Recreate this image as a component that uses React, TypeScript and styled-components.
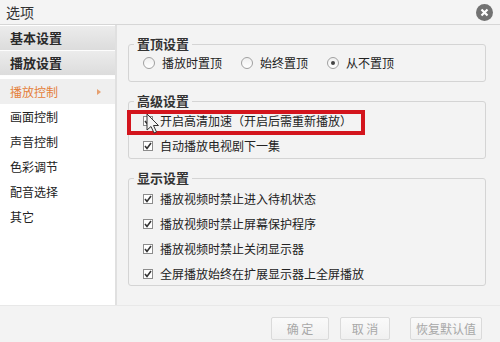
import styled, { createGlobalStyle } from "styled-components";

const GlobalStyle = createGlobalStyle`
  html, body {
    margin: 0;
    padding: 0;
    background: #f3f3f3;
  }
  body {
    font-family: "Noto Sans CJK SC", "Liberation Sans", sans-serif;
  }
`;

const Window = styled.div`
  position: relative;
  width: 500px;
  height: 342px;
  display: flex;
  flex-direction: column;
  overflow: hidden;
  background: #f3f3f3;
  color: #222;
  font-size: 12px;
`;

const TitleBar = styled.div`
  flex: none;
  height: 24px;
  display: flex;
  align-items: center;
  justify-content: space-between;
  padding: 0 7px 0 6px;
  background: #f4f4f4;
  border-bottom: 1px solid #d6d6d6;
`;

const Title = styled.span`
  font-size: 14px;
  line-height: 1;
  color: #333;
`;

const CloseButton = styled.div`
  width: 17px;
  height: 17px;
  border-radius: 50%;
  background: #727272;
  display: flex;
  align-items: center;
  justify-content: center;
`;

const Body = styled.div`
  flex: none;
  height: 280px;
  display: flex;
`;

const Sidebar = styled.div`
  width: 115px;
  flex: none;
  background: #fff;
  border-right: 2px solid #e0e0e0;
  display: flex;
  flex-direction: column;
  padding-top: 1px;
`;

const SectionHeader = styled.div`
  height: 24px;
  line-height: 24px;
  padding-left: 10px;
  font-size: 13px;
  font-weight: bold;
  color: #2a2a2a;
  background: linear-gradient(#ececec, #dcdcdc);
  border-bottom: 1px solid #fdfdfd;
`;

const NavList = styled.div`
  margin-top: 3px;
  display: flex;
  flex-direction: column;
`;

const NavItem = styled.div<{ $active?: boolean }>`
  height: 25px;
  line-height: 25px;
  padding: 0 14px 0 10px;
  display: flex;
  align-items: center;
  justify-content: space-between;
  color: ${(p) => (p.$active ? "#e5803a" : "#222")};
  background: ${(p) => (p.$active ? "#efefef" : "transparent")};
`;

const NavArrow = styled.span`
  width: 0;
  height: 0;
  border-top: 3px solid transparent;
  border-bottom: 3px solid transparent;
  border-left: 4px solid #e6a070;
`;

const Content = styled.div`
  flex: 1;
  padding: 11px 14px 0 11px;
  display: flex;
  flex-direction: column;
  gap: 11px;
`;

const Group = styled.fieldset`
  margin: 0;
  padding: 0;
  min-width: 0;
  border: 1px solid #d4d4d4;
  border-radius: 3px;
`;

const Legend = styled.legend`
  margin-left: 5px;
  padding: 0 3px;
  font-size: 13px;
  line-height: 16px;
  font-weight: bold;
  color: #333;
`;

const Options = styled.div<{ $row?: boolean; $pt: number; $pb: number }>`
  display: flex;
  flex-direction: ${(p) => (p.$row ? "row" : "column")};
  gap: ${(p) => (p.$row ? 19 : 9)}px;
  padding: ${(p) => p.$pt}px 14px ${(p) => p.$pb}px 14px;
`;

const Option = styled.label<{ $marked?: boolean }>`
  position: relative;
  height: 16px;
  display: flex;
  align-items: center;
  gap: 7px;
  line-height: 16px;
  color: #222;
  white-space: nowrap;

  ${(p) =>
    p.$marked &&
    `
    &::after {
      content: "";
      position: absolute;
      left: -16px;
      top: -3px;
      width: 238px;
      height: 25px;
      box-sizing: border-box;
      border: 4px solid #d3151d;
    }
  `}
`;

const Box = styled.span`
  width: 10px;
  height: 10px;
  flex: none;
  box-sizing: border-box;
  border: 1px solid #8c8c8c;
  background: #fff;
  display: flex;
  align-items: center;
  justify-content: center;
`;

const RadioCircle = styled.span<{ $on?: boolean }>`
  width: 12px;
  height: 12px;
  flex: none;
  box-sizing: border-box;
  border-radius: 50%;
  border: 1px solid #a0a0a0;
  background: linear-gradient(#f0f0f0, #fff);
  display: flex;
  align-items: center;
  justify-content: center;

  &::after {
    content: "";
    width: 4px;
    height: 4px;
    border-radius: 50%;
    background: ${(p) => (p.$on ? "#444" : "transparent")};
  }
`;

const Footer = styled.div`
  flex: 1;
  display: flex;
  justify-content: flex-end;
  align-items: flex-start;
  padding: 11px 18px 0 0;
  border-top: 1px solid #e8e8e8;
`;

const Button = styled.div<{ $w: number; $gap?: number }>`
  width: ${(p) => p.$w}px;
  height: 23px;
  margin-left: ${(p) => p.$gap ?? 0}px;
  box-sizing: border-box;
  border: 1px solid #dadada;
  border-radius: 2px;
  background: linear-gradient(#fafafa, #f0f0f0);
  display: flex;
  align-items: center;
  justify-content: center;
  color: #a8a8a8;
  font-size: 12px;
  white-space: pre;
`;

const Cursor = styled.svg`
  position: absolute;
  left: 146px;
  top: 113px;
`;

const Check = ({ label, marked }: { label: string; marked?: boolean }) => (
  <Option $marked={marked}>
    <Box>
      <svg width="8" height="8" viewBox="0 0 8 8">
        <path d="M1 4 L3 6.5 L7 1" fill="none" stroke="#333" strokeWidth="1.6" />
      </svg>
    </Box>
    {label}
  </Option>
);

const Radio = ({ label, on }: { label: string; on?: boolean }) => (
  <Option>
    <RadioCircle $on={on} />
    {label}
  </Option>
);

const navItems = ["播放控制", "画面控制", "声音控制", "色彩调节", "配音选择", "其它"];

export default function App() {
  return (
    <Window>
      <GlobalStyle />
      <TitleBar>
        <Title>选项</Title>
        <CloseButton>
          <svg width="9" height="9" viewBox="0 0 9 9">
            <path d="M1.5 1.5 L7.5 7.5 M7.5 1.5 L1.5 7.5" stroke="#fff" strokeWidth="2.2" />
          </svg>
        </CloseButton>
      </TitleBar>
      <Body>
        <Sidebar>
          <SectionHeader>基本设置</SectionHeader>
          <SectionHeader>播放设置</SectionHeader>
          <NavList>
            {navItems.map((item, i) => (
              <NavItem key={item} $active={i === 0}>
                {item}
                {i === 0 && <NavArrow />}
              </NavItem>
            ))}
          </NavList>
        </Sidebar>
        <Content>
          <Group>
            <Legend>置顶设置</Legend>
            <Options $row $pt={3} $pb={10}>
              <Radio label="播放时置顶" />
              <Radio label="始终置顶" />
              <Radio label="从不置顶" on />
            </Options>
          </Group>
          <Group>
            <Legend>高级设置</Legend>
            <Options $pt={4} $pb={4}>
              <Check label="开启高清加速（开启后需重新播放）" marked />
              <Check label="自动播放电视剧下一集" />
            </Options>
          </Group>
          <Group>
            <Legend>显示设置</Legend>
            <Options $pt={5} $pb={3}>
              <Check label="播放视频时禁止进入待机状态" />
              <Check label="播放视频时禁止屏幕保护程序" />
              <Check label="播放视频时禁止关闭显示器" />
              <Check label="全屏播放始终在扩展显示器上全屏播放" />
            </Options>
          </Group>
        </Content>
      </Body>
      <Footer>
        <Button $w={58}>确 定</Button>
        <Button $w={50} $gap={11}>取 消</Button>
        <Button $w={72} $gap={20}>恢复默认值</Button>
      </Footer>
      <Cursor width="14" height="22" viewBox="0 0 14 22">
        <path
          d="M1 1 L1 17 L5 13.5 L8 20 L10.5 19 L7.5 12.5 L12.5 12.5 Z"
          fill="#f4f4f4"
          stroke="#333"
          strokeWidth="1"
          strokeLinejoin="round"
        />
      </Cursor>
    </Window>
  );
}
